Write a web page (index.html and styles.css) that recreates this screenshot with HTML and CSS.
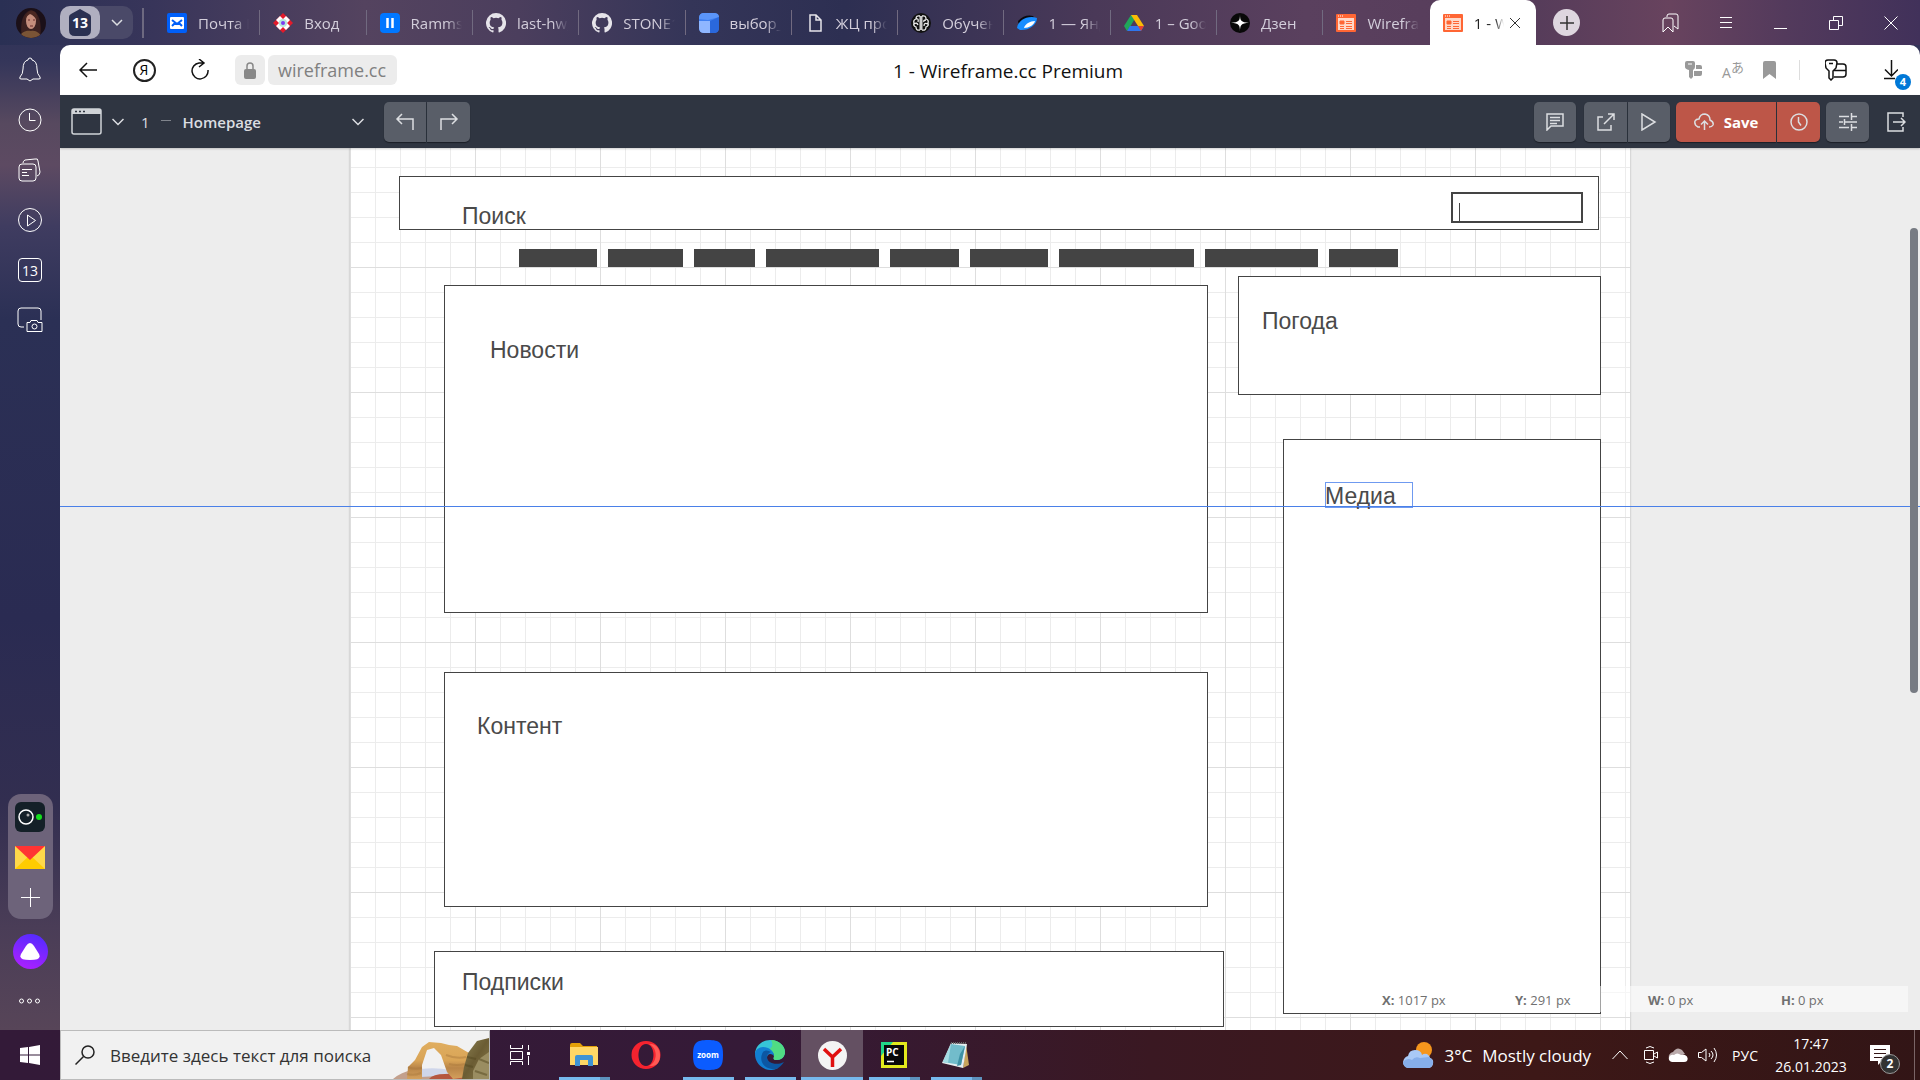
FILE: index.html
```html
<!DOCTYPE html>
<html lang="ru">
<head>
<meta charset="utf-8">
<title>1 - Wireframe.cc Premium</title>
<link rel="stylesheet" href="styles.css">
</head>
<body>
<div class="browser">
  <header class="tabstrip">
    <div class="profile">
      <svg width="30" height="30" viewBox="0 0 30 30"><defs><clipPath id="round"><circle cx="15" cy="15" r="15"/></clipPath></defs><g clip-path="url(#round)"><rect width="30" height="30" fill="#1b1018"/><path d="M6 30C4 18 5 5 15 2c9 2 11 15 9 28z" fill="#3c2120"/><ellipse cx="15" cy="13" rx="5" ry="8" fill="#c58e7c"/><path d="M9 12c0-6 4-9 7-9 4 0 6 4 5 10-2-4-4-6-7-7-2 1-4 3-5 6z" fill="#4a2822"/><path d="M12 12h2m3 0h2M14 18h3" stroke="#6b2d2b" stroke-width="1"/><path d="M3 30c2-6 7-8 12-7 5-1 9 2 11 7z" fill="#7a5436"/></g></svg>
    </div>
    <div class="tab-group">
      <button class="tab-count" aria-label="13 вкладок"><svg width="22" height="28" viewBox="0 0 22 28"><path d="M11 0 20 5q2 1 2 3v13q0 6-6 6H6q-6 0-6-6V8q0-2 2-3z" fill="#2b3152"/></svg><b>13</b></button>
      <button class="tab-menu" aria-label="Группы"><svg width="12" height="8" viewBox="0 0 12 8"><path d="m1 1 5 5 5-5" class="thin"/></svg></button>
    </div>
    <i class="strip-rule"></i>
    <nav class="tabs">
      <a class="tab" href="#"><svg width="20" height="20" viewBox="0 0 20 20"><rect width="20" height="20" rx="2" fill="#005ff9"/><rect x="3" y="4" width="14" height="12" rx="1" fill="#fff"/><path d="m5 7 5 4 5-4M5 13l3-3m7 3-3-3" fill="none" stroke="#005ff9" stroke-width="2"/></svg><span>Почта Mail</span></a>
      <a class="tab" href="#"><svg width="20" height="20" viewBox="0 0 20 20"><path d="m10 0 10 10-10 10L0 10z" fill="#e31b2b"/><path d="m7 3 3 3 3-3 4 4-3 3 3 3-4 4-3-3-3 3-4-4 3-3-3-3z" fill="#fff"/><circle cx="10" cy="10" r="4" fill="#b8e8d8"/><circle cx="10" cy="10" r="2" fill="#7a3cf0"/></svg><span>Вход</span></a>
      <a class="tab" href="#"><svg width="20" height="20" viewBox="0 0 20 20"><rect width="20" height="20" rx="4" fill="#07f"/><path d="M7.500 5v10m5-10v10" stroke="#fff" stroke-width="2.500"/></svg><span>Rammstein</span></a>
      <a class="tab" href="#"><svg width="20" height="20" viewBox="0 0 16 16"><path d="M8 0a8 8 0 0 0-2.530 15.590c.4.070.55-.17.55-.38v-1.490c-2.010.37-2.530-.49-2.690-.94-.09-.23-.48-.94-.82-1.130-.28-.15-.68-.52-.01-.53.63-.01 1.080.58 1.230.82.72 1.210 1.870.87 2.330.66.070-.52.280-.87.510-1.070-1.780-.2-3.640-.89-3.640-3.950 0-.87.310-1.590.82-2.150-.08-.2-.36-1.020.08-2.120 0 0 .67-.21 2.200.82a7.600 7.600 0 0 1 4 0c1.530-1.040 2.200-.82 2.200-.82.44 1.100.16 1.920.08 2.120.51.56.82 1.270.82 2.150 0 3.070-1.870 3.750-3.650 3.950.29.25.54.73.54 1.480v2.200c0 .21.15.46.55.38A8 8 0 0 0 8 0z" fill="#e6e4ea"/></svg><span>last-hw_2</span></a>
      <a class="tab" href="#"><svg width="20" height="20" viewBox="0 0 16 16"><path d="M8 0a8 8 0 0 0-2.530 15.590c.4.070.55-.17.55-.38v-1.490c-2.010.37-2.530-.49-2.690-.94-.09-.23-.48-.94-.82-1.130-.28-.15-.68-.52-.01-.53.63-.01 1.080.58 1.230.82.72 1.210 1.870.87 2.330.66.070-.52.280-.87.510-1.070-1.780-.2-3.640-.89-3.640-3.950 0-.87.310-1.590.82-2.150-.08-.2-.36-1.020.08-2.120 0 0 .67-.21 2.200.82a7.600 7.600 0 0 1 4 0c1.530-1.040 2.200-.82 2.200-.82.44 1.100.16 1.920.08 2.120.51.56.82 1.270.82 2.150 0 3.070-1.870 3.750-3.650 3.950.29.25.54.73.54 1.480v2.200c0 .21.15.46.55.38A8 8 0 0 0 8 0z" fill="#e6e4ea"/></svg><span>STONE1</span></a>
      <a class="tab" href="#"><svg width="20" height="20" viewBox="0 0 20 20"><rect width="20" height="20" rx="5" fill="#3f7ff0"/><path d="M0 6V5q0-5 5-5h10q5 0 5 4L9 7z" fill="#5b95f8"/><path d="M0 8h11v12H5q-5 0-5-5z" fill="#8fb6ff"/><path d="m11 8 9-4v11q0 5-5 5h-4z" fill="#2a68dc"/></svg><span>выбор_1</span></a>
      <a class="tab" href="#"><svg width="20" height="20" viewBox="0 0 20 20"><path d="M5 2h6l5 5v11H5zM11 2v5h5" fill="none" stroke="#e6e4ea" stroke-width="1.500"/></svg><span>ЖЦ прое</span></a>
      <a class="tab" href="#"><svg width="20" height="20" viewBox="0 0 20 20"><circle cx="10" cy="10" r="10" fill="#111"/><g fill="none" stroke="#eee" stroke-width="1.300"><path d="M9.200 3v14M10.800 3v14M9 3Q5 2 5 6q-3 1-2 4-1 3 2 4 0 4 4 3M11 3q4-1 4 3 3 1 2 4 1 3-2 4 0 4-4 3M5 6q3-1 2 3M3 11q3-2 4 1M15 7q-3 0-2 2M17 11q-4-2-4 2"/></g></svg><span>Обучение</span></a>
      <a class="tab" href="#"><svg width="20" height="20" viewBox="0 0 20 20"><path d="M1 8Q8 1 16 3l3 4-9 2-8 4z" fill="#0a0a10"/><path d="M0 15C1 7 11 2 20 5c0 7-9 13-17 12z" fill="#178dff"/><path d="M7 15c1-4 6-7 11-7-1 4-6 7-11 7z" fill="#fff"/></svg><span>1 — Янде</span></a>
      <a class="tab" href="#"><svg width="20" height="20" viewBox="0 0 20 20"><path d="M7 2h6L6 14l-3 4-3-5z" fill="#20a75a"/><path d="M7 2h6l7 11h-6z" fill="#fbbc05"/><path d="M6 13h14l-3 5H3z" fill="#2f76ed"/><path d="M14 13h6l-3 5z" fill="#e5432f"/></svg><span>1 – Googl</span></a>
      <a class="tab" href="#"><svg width="20" height="20" viewBox="0 0 20 20"><circle cx="10" cy="10" r="10" fill="#080808"/><path d="M10 1c0 7 1 8 9 9-8 0-9 2-9 9 0-7-1-9-9-9 8-1 9-2 9-9z" fill="#fff"/></svg><span>Дзен</span></a>
      <a class="tab" href="#"><svg width="20" height="18" viewBox="0 0 20 18"><rect width="20" height="18" rx="1" fill="#ff6634"/><path d="M2 4h16v12H2z" fill="#ffd8c8"/><path d="M2 2h1m1 0h1m1 0h1" stroke="#fff"/><path d="M4 7h4v3H4zm6 .5h6m-6 2h6M4 12.500h4m2 0h6M4 14.500h4m2 0h6" fill="#ff6634" stroke="#ff6634"/></svg><span>Wireframe</span></a>
      <a class="tab tab-active" href="#"><svg width="20" height="18" viewBox="0 0 20 18"><rect width="20" height="18" rx="1" fill="#ff6634"/><path d="M2 4h16v12H2z" fill="#ffd8c8"/><path d="M2 2h1m1 0h1m1 0h1" stroke="#fff"/><path d="M4 7h4v3H4zm6 .5h6m-6 2h6M4 12.500h4m2 0h6M4 14.500h4m2 0h6" fill="#ff6634" stroke="#ff6634"/></svg><span>1 - Wire</span><svg class="tab-close" width="10" height="10" viewBox="0 0 10 10"><path d="m0 0 10 10M10 0 0 10" stroke="#333" fill="none"/></svg></a>
    </nav>
    <button class="new-tab" aria-label="Новая вкладка"><svg width="14" height="14" viewBox="0 0 14 14"><path d="M7 0v14M0 7h14" stroke="#333" stroke-width="1.500"/></svg></button>
    <div class="window-controls">
      <button aria-label="Закладки"><svg width="18" height="20" viewBox="0 0 18 20"><path d="M1 19V7q0-2 2-2h6q2 0 2 2v12l-5-5zM5 4V3q0-2 2-2h7q2 0 2 2v13l-4-3" class="line"/></svg></button>
      <button aria-label="Меню"><svg width="12" height="12" viewBox="0 0 12 12"><path d="M0 .5h12M0 5.500h12M0 10.500h12" class="line"/></svg></button>
      <button aria-label="Свернуть"><svg width="14" height="14" viewBox="0 0 14 14"><path d="M0 12.500h13" class="line"/></svg></button>
      <button aria-label="Развернуть"><svg width="14" height="14" viewBox="0 0 14 14"><path d="M.5 4.500h9v9h-9zM4.500 4V.5h9v9H10" class="line"/></svg></button>
      <button aria-label="Закрыть"><svg width="14" height="14" viewBox="0 0 14 14"><path d="m.5.500 13 13m0-13-13 13" class="line"/></svg></button>
    </div>
  </header>

  <aside class="sidebar">
    <button aria-label="Уведомления"><svg width="24" height="26" viewBox="0 0 24 26"><path d="M2 20q3-3 3-8 0-8 5-9 0-2 2-2t2 2q5 1 5 9 0 5 3 8 1 2-1 2h-6l-3 2-3-2H3q-2 0-1-2z" class="line"/></svg></button>
    <button aria-label="История"><svg width="24" height="24" viewBox="0 0 24 24"><circle cx="12" cy="12" r="11" class="line"/><path d="M11.500 5v7.500h6" class="line"/></svg></button>
    <button aria-label="Коллекции"><svg width="24" height="24" viewBox="0 0 24 24"><rect x="1" y="6" width="17" height="17" rx="3" class="line"/><path d="M5 5q0-2 2-3l10-1q3-1 3 2l2 11q0 3-3 4M4 11.500h10M4 14.500h5M4 17.500h7" class="line"/></svg></button>
    <button aria-label="Видео"><svg width="24" height="24" viewBox="0 0 24 24"><circle cx="12" cy="12" r="11.500" class="line"/><path d="M9.500 7v11l8-5.500z" class="line"/></svg></button>
    <button class="calendar" aria-label="Календарь">13</button>
    <button aria-label="Снимок экрана"><svg width="26" height="26" viewBox="0 0 26 26"><path d="M24 13V4q0-3-3-3H4Q1 1 1 4v13q0 3 3 3h3" class="line"/><path d="M10 15.500h3l1-2h6l1 2h4v9H10z" class="line"/><circle cx="17.500" cy="19.500" r="2.500" class="line"/></svg></button>
    <div class="dock">
      <button aria-label="Камера"><svg width="30" height="30" viewBox="0 0 30 30"><rect width="30" height="30" rx="6" fill="#142028"/><circle cx="11" cy="15" r="7" fill="none" stroke="#fff" stroke-width="1.500"/><circle cx="13" cy="13" r="1.500" fill="#aaa"/><circle cx="24" cy="15" r="3" fill="#13e01c"/></svg></button>
      <button aria-label="Почта"><svg width="30" height="23" viewBox="0 0 30 23"><path d="M0 0h30v23H0z" fill="#ffd94a"/><path d="m0 23 15-14 15 14z" fill="#fc0"/><path d="M0 0h30L15 14z" fill="#f33"/></svg></button>
      <button aria-label="Добавить"><svg width="20" height="28" viewBox="0 0 20 28"><path d="M10.500 5v19M1 14.500h19" class="line"/></svg></button>
    </div>
    <button class="alice" aria-label="Алиса"><svg width="20" height="18" viewBox="0 0 20 18"><path d="M10 0q2 0 4 3l5 8q3 6-9 6t-9-6l5-8q2-3 4-3z" fill="#fff"/></svg></button>
    <button aria-label="Ещё"><svg width="24" height="6" viewBox="0 0 24 6"><circle cx="3.500" cy="3" r="2" class="line"/><circle cx="11.500" cy="3" r="2" class="line"/><circle cx="19.500" cy="3" r="2" class="line"/></svg></button>
  </aside>

  <div class="window">
    <div class="addressbar">
      <div class="nav-buttons">
        <button aria-label="Назад"><svg width="18" height="16" viewBox="0 0 18 16"><path d="M18 8H1m7-7L1 8l7 7" class="ink"/></svg></button>
        <button aria-label="Яндекс" class="ya"><span>Я</span></button>
        <button aria-label="Обновить"><svg width="20" height="22" viewBox="0 0 20 22"><path d="M13 4H9a8 8 0 1 0 9 7M9 0l5 4-5 4" class="ink"/></svg></button>
      </div>
      <div class="site">
        <button class="lock" aria-label="Защищено"><svg width="12" height="17" viewBox="0 0 12 17"><path d="M3 8V4q0-3 3-3t3 3v4" fill="none" stroke="#888" stroke-width="1.500"/><rect y="7" width="12" height="10" rx="2" fill="#888"/></svg></button>
        <a class="host" href="#">wireframe.cc</a>
      </div>
      <h1 class="page-title">1 - Wireframe.cc Premium</h1>
      <div class="page-tools">
        <button aria-label="Пароли"><svg width="18" height="18" viewBox="0 0 18 18" fill="#999"><path d="M1 2q0-2 2-2h6q2 0 2 2v4q0 2-2 3v7l-2 2-2-2V9Q1 8 1 6z"/><path d="M12 4h4q2 0 2 2v2h-6zM10 10h8v3q0 2-2 2h-6z"/><path d="M4 3h4" stroke="#fff"/></svg></button>
        <button class="translate" aria-label="Перевести"><sub>A</sub><sup>あ</sup></button>
        <button aria-label="В закладки"><svg width="13" height="18" viewBox="0 0 13 18"><path d="M0 2q0-2 2-2h9q2 0 2 2v16l-6.500-5L0 18z" fill="#999"/></svg></button>
        <i></i>
        <button aria-label="Ключи"><svg width="22" height="22" viewBox="0 0 22 22"><path d="M3 1h6q3 0 3 3l-1 5-3 3v7l-2 2-2-2v-7L1 9 0 4q0-3 3-3zM4 4.500h4M12.500 5H18q3 0 3 3v7q0 3-3 3h-9M9 11.500h12" class="ink"/></svg></button>
        <button class="downloads" aria-label="Загрузки"><svg width="14" height="20" viewBox="0 0 14 20"><path d="M7.500 0v16M1 9.500l6.500 6.500 6.500-6.500M0 18.500h11" class="ink"/></svg><b>4</b></button>
      </div>
    </div>

    <div class="toolbar">
      <button class="device" aria-label="Устройство"><svg width="31" height="27" viewBox="0 0 31 27"><rect x="1" y="1" width="29" height="25" rx="2" fill="none" stroke="#d0d3d7" stroke-width="1.500"/><path d="M1 1h29v5H1z" fill="#d0d3d7"/><path d="M4 3.500h2m2 0h2m2 0h2" stroke="#2f3540" stroke-width="1.500"/></svg><svg width="12" height="8" viewBox="0 0 12 8"><path d="m.5 1 5.500 5.500L11.500 1" class="thin"/></svg></button>
      <button class="page-picker"><span>1</span><i></i><b>Homepage</b><svg width="12" height="8" viewBox="0 0 12 8"><path d="m.5 1 5.500 5.500L11.500 1" class="thin"/></svg></button>
      <div class="group">
        <button class="tool undo" aria-label="Отменить"><svg width="20" height="18" viewBox="0 0 20 18"><path d="M18 17V6H2m5-5L2 6l5 5" class="thin"/></svg></button>
        <button class="tool" aria-label="Повторить"><svg width="20" height="18" viewBox="0 0 20 18"><path d="M2 17V6h16m-5-5 5 5-5 5" class="thin"/></svg></button>
      </div>
      <div class="actions">
        <button class="tool comment" aria-label="Комментарии"><svg width="18" height="18" viewBox="0 0 18 18"><path d="M1 1h16v12H5l-4 4zM4 4.500h10M4 7.500h10M4 10.500h7" class="thin"/></svg></button>
        <div class="group">
          <button class="tool" aria-label="Открыть"><svg width="18" height="18" viewBox="0 0 18 18"><path d="M6 4H1v13h13v-5M11 1h6v6M17 1 7 11" class="thin"/></svg></button>
          <button class="tool undo" aria-label="Просмотр"><svg width="16" height="18" viewBox="0 0 16 18"><path d="M1 1v16l13-8z" class="thin"/></svg></button>
        </div>
        <div class="group">
          <button class="tool save"><svg width="20" height="18" viewBox="0 0 20 18"><path d="M6 14H4Q0 12 1 8q1-2 4-2 1-5 6-5 5 1 5 6 4 2 3 5-1 2-4 2M10.500 17V8M7 11.500 10.500 8l3.500 3.500" class="thin"/></svg>Save</button>
          <button class="tool history" aria-label="Версии"><svg width="18" height="18" viewBox="0 0 18 18"><circle cx="9" cy="9" r="8" class="thin"/><path d="M8.500 4v5l2.500 3.500" class="thin"/></svg></button>
        </div>
        <button class="tool" aria-label="Настройки"><svg width="18" height="18" viewBox="0 0 18 18"><path d="M0 3.500h10m2 0h6M0 9h4m2 0h12M0 14.500h10m2 0h6M12.500 0v7M5.500 6v6M12.500 11v7" class="thin"/></svg></button>
        <button class="exit" aria-label="Выйти"><svg width="19" height="20" viewBox="0 0 19 20"><path d="M16 5V1H1v18h15v-4M6 10h12m-4-4 4 4-4 4" class="thin"/></svg></button>
      </div>
    </div>

    <main class="viewport">
      <div class="artboard">
        <section class="shape s-search"></section>
        <input class="shape s-input" aria-label="Поиск" value="">
        <i class="caret"></i>
        <h2 class="label l-search">Поиск</h2>
        <div class="bars"><i class="w78"></i><i class="w75"></i><i class="w61"></i><i class="w113"></i><i class="w69"></i><i class="w78"></i><i class="w135"></i><i class="w113"></i><i class="w69"></i></div>
        <section class="shape s-news"></section><h2 class="label l-news">Новости</h2>
        <section class="shape s-weather"></section><h2 class="label l-weather">Погода</h2>
        <section class="shape s-media"></section><h2 class="label l-media">Медиа</h2>
        <section class="shape s-content"></section><h2 class="label l-content">Контент</h2>
        <section class="shape s-subs"></section><h2 class="label l-subs">Подписки</h2>
      </div>
      <i class="guide"></i>
      <div class="readout"><span><b>X:</b> 1017 px</span><span><b>Y:</b> 291 px</span><span><b>W:</b> 0 px</span><span><b>H:</b> 0 px</span></div>
      <i class="scroll-thumb"></i>
    </main>
  </div>
</div>

<footer class="taskbar">
  <button class="start" aria-label="Пуск"><svg width="20" height="20" viewBox="0 0 20 20" fill="#fff"><path d="m0 3 8-1v7.500H0zM9 2l11-2v9.500H9zM0 10.500h8V18l-8-1zM9 10.500h11V20L9 18z"/></svg></button>
  <label class="search">
    <svg width="20" height="20" viewBox="0 0 20 20"><circle cx="13" cy="7" r="6" fill="none" stroke="#222" stroke-width="1.500"/><path d="M8.500 11.500.500 19.500" stroke="#222" stroke-width="1.500"/></svg>
    <input type="text" placeholder="Введите здесь текст для поиска" aria-label="Поиск Windows">
    <svg class="fossils" width="98" height="48" viewBox="0 0 98 48"><defs><linearGradient id="sand" x2="0" y2="1"><stop stop-color="#e0ae60"/><stop offset=".5" stop-color="#d9a456"/><stop offset=".7" stop-color="#b98548"/><stop offset="1" stop-color="#d4a05c"/></linearGradient><linearGradient id="rock" x2="1" y2="1"><stop stop-color="#8d8355"/><stop offset=".5" stop-color="#6b5c33"/><stop offset="1" stop-color="#8a7c4c"/></linearGradient></defs><path d="M2 48q8-7 20-9h52v9z" fill="#c3a08c"/><path d="M30 38q14-2 30 1l4 5-34 2z" fill="#cfd6ea"/><path d="M38 48q4-5 16-5 14-1 20 5z" fill="#b5573f"/><path d="M16 48 17 36 24 29 31 16 38 11 50 12 58 14 66 15 78 22 76 46 62 48 56 41 50 24 43 17 36 19 31 34V48z" fill="url(#sand)"/><path d="M17 36q6 3 14 1M16 43q7 2 14-1M55 24q10 4 20 2M58 33q8 2 16 0" fill="none" stroke="#a8783c" stroke-opacity=".45" stroke-width="2"/><path d="m71 48 2-12 4-14 9-12 12-3v41z" fill="url(#rock)"/><path d="M82 48v-8l6-12 10-7v27z" fill="#9a8d61"/><path d="m74 34 8 2M76 26l9 2M84 40l12 4M88 28l10 4" stroke="#54471f" stroke-opacity=".5" stroke-width="2"/></svg>
  </label>
  <div class="apps">
    <button class="views" aria-label="Представление задач"><svg width="20" height="20" viewBox="0 0 20 20"><path d="M.5 0v3.500h12V0M.5 6.500h12v8H.5zM.5 20v-3.500h12V20M18.500 0v5m0 6v9" class="line"/><path d="M17 7h3v3h-3z" fill="#fff"/></svg></button>
    <button class="running many" aria-label="Проводник"><svg width="28" height="24" viewBox="0 0 28 24"><path d="M0 2q0-2 2-2h8l3 3h14v5H0z" fill="#e3a008"/><path d="M0 4h28v18H0z" fill="#ffd766"/><path d="M5 23V14q0-2 2-2h14q2 0 2 2v9h-5v-6h-8v6z" fill="#3f93d4"/></svg></button>
    <button aria-label="Opera"><svg width="30" height="30" viewBox="0 0 30 30"><path fill-rule="evenodd" d="M15 1a14.500 14 0 1 0 0 28 14.500 14 0 1 0 0-28zm0 3c-10 0-10 22 0 22S25 4 15 4z" fill="#f5232f"/><path d="M18 4c9 4 9 18 0 22 10 1 11-6 11-11S26 3 18 4z" fill="#ff5a55"/></svg></button>
    <button class="running" aria-label="Zoom"><svg width="30" height="30" viewBox="0 0 30 30"><path d="M15 0c12 0 15 3 15 15s-3 15-15 15S0 27 0 15 3 0 15 0z" fill="#0b5cff"/></svg><b class="zoom-word">zoom</b></button>
    <button class="running" aria-label="Edge"><svg width="30" height="30" viewBox="0 0 30 30"><path d="M0 15C0 4 9 0 15 0c9 0 15 6 15 12 0 5-4 8-8 8-5 0-3-2-3-4 0-4-4-7-9-7-6 0-10 4-10 6z" fill="#36c5d8"/><path d="M16 0c9 0 14 7 14 12s-4 8-8 8c-5 0-3-2-3-4 0-4-3-6-5-7 4-1 4-6 2-9z" fill="#50dc83"/><path d="M0 14c0-4 4-7 8-7 6 0 11 4 11 9-2-3-7-3-7 2 0 6 5 9 11 10C13 34 0 26 0 14z" fill="#127fd2"/><path d="M8 12c-5 9 1 18 13 17 3-1 6-4 8-7-8 4-17 1-17-5 0-3 2-4 4-5-3-2-6-2-8 0z" fill="#0c57a3"/></svg></button>
    <button class="running current" aria-label="Yandex"><svg width="29" height="29" viewBox="0 0 29 29"><circle cx="14.500" cy="14.500" r="14.500" fill="#f4f4f4"/><path d="m6 8 8.500 8L23 8M14.500 15v11" fill="none" stroke="#e01010" stroke-width="3.500"/></svg></button>
    <button class="running many" aria-label="PyCharm"><svg width="26" height="26" viewBox="0 0 26 26"><path d="M0 0h26v26H0z" fill="#e2ea1c"/><path d="M0 0h12L0 14z" fill="#21d789"/><path d="M3 3h20v20H3z" fill="#080808"/><path d="M6 19.500h7" stroke="#fff" stroke-width="1.500"/></svg><b class="pc-word">PC</b></button>
    <button class="running many" aria-label="Блокнот"><svg width="28" height="26" viewBox="0 0 28 26"><path d="m24 2 3 21-6 3z" fill="#c7a35a"/><path d="m9 1 16 1-4 24-21-5z" fill="#e5edf0"/><path d="m9 2 14 2-4 19-18-3z" fill="#72bccb"/><path d="M9 2 6 21l-5-1z" fill="#a5dce4"/><path d="m18 12 5-8-4 19-4 1z" fill="#3e91a5"/><path d="M9 1h16" stroke="#666" stroke-dasharray="1 1" stroke-width="2"/></svg></button>
  </div>
  <div class="tray">
    <button class="weather"><svg width="31" height="27" viewBox="0 0 31 27"><circle cx="21" cy="8" r="8" fill="#f5961d"/><path d="M6 26q-6-1-6-6 1-5 5-6 1-6 7-6 6 0 7 5 2-2 5-1 3 2 3 4 4 1 3 6-1 4-5 4z" fill="#a9c9f6"/><path d="M4 26q-4-2-4-6 4-5 9-2 3-4 8-2l9-1q4 2 4 6-1 5-5 5z" fill="#86aeea"/></svg><span>3°C</span><span>Mostly cloudy</span></button>
    <button class="more" aria-label="Скрытые значки"><svg width="16" height="10" viewBox="0 0 16 10"><path d="m.5 9 7.500-8 7.500 8" class="line"/></svg></button>
    <button aria-label="Встреча"><svg width="14" height="18" viewBox="0 0 14 18"><path d="M.5 4.500h9v9h-9zM10 8l3.500-2v6L10 10M2 2q4-3 8 0M2 16q4 3 8 0" class="line"/></svg></button>
    <button aria-label="OneDrive"><svg width="20" height="14" viewBox="0 0 20 14"><path d="M4 12Q0 11 1 7q2-3 4-3 4-6 9-2l3 4z" fill="#b9a9aa"/><path d="M4 14Q0 13 1 9q2-3 5-2 3-3 7 0l4 0q4 2 2 6-1 1-3 1z" fill="#fff"/></svg></button>
    <button aria-label="Звук"><svg width="20" height="16" viewBox="0 0 20 16"><path d="M.5 5.500h3L8 2v12l-4.500-3.500h-3zM11 6q2 2 0 4M13 4q4 4 0 8M16 1q5 7 0 14" class="line"/></svg></button>
    <button class="lang">РУС</button>
    <button class="clock"><span>17:47</span><span>26.01.2023</span></button>
    <button class="notices" aria-label="Уведомления"><svg width="20" height="20" viewBox="0 0 20 20"><path d="M0 0h20v16h-8l-4 4v-4H0z" fill="#fff"/><path d="M4 4.500h12M4 8.500h12M4 12.500h8" stroke="#331516"/></svg><b>2</b></button>
  </div>
</footer>
</body>
</html>
```
FILE: styles.css
```css
* { box-sizing: border-box; }
html, body { height: 100%; margin: 0; }
body {
  display: flex;
  flex-direction: column;
  overflow: hidden;
  font-family: "Open Sans", "Noto Sans", "Noto Sans CJK JP", sans-serif;
  font-size: 15px;
}
button {
  display: flex;
  align-items: center;
  justify-content: center;
  padding: 0;
  border: 0;
  background: none;
  color: inherit;
  font: inherit;
}
a { color: inherit; text-decoration: none; }
svg { display: block; flex: none; }
.line { fill: none; stroke: #fff; stroke-width: 1; }
.ink { fill: none; stroke: #111; stroke-width: 1.5; }
.thin { fill: none; stroke: #dcdee1; stroke-width: 1.5; }

.browser {
  flex: 1;
  min-height: 0;
  display: grid;
  grid-template: 45px 1fr / 60px 1fr;
  background: linear-gradient(#2d3155 0, #35365a 6%, #57495f 12%, #5d4a62 16%, #3f3c60 22%, #2b3055 31%, #2a2b52 60%, #322e50 78%, #4a3d57 90%, #574558 100%);
}

/* Tab strip */
.tabstrip {
  grid-column: 1 / 3;
  display: flex;
  align-items: center;
  min-width: 0;
  color: #d3cedb;
  background: linear-gradient(90deg, #2a3054 0, #38355a 8%, #54435f 19%, #4b3e5d 27%, #343558 36%, #2d2f52 44%, #4a3958 57%, #5a405e 68%, #563c5a 80%, #68435e 87%, #533a5c 93%, #41315a 100%);
}
.profile { width: 60px; display: flex; justify-content: center; padding-left: 2px; }
.tab-group { display: flex; width: 73px; height: 33px; border-radius: 10px; background: #4a4968; }
.tab-count { position: relative; width: 40px; border-radius: 10px; background: #b0afc0; }
.tab-count b { position: absolute; color: #fff; font-size: 14px; }
.tab-menu { flex: 1; }
.strip-rule { width: 2px; height: 30px; margin: 0 10px 0 9px; background: #6d6980; }
.tabs { flex: 0 1 1382px; min-width: 0; height: 45px; display: grid; grid-template-columns: repeat(13, minmax(0, 1fr)); }
.tab {
  position: relative;
  display: flex;
  align-items: center;
  gap: 11px;
  padding: 0 11px 0 13px;
}
.tab:not(.tab-active)::after { content: ""; position: absolute; right: 0; top: 10px; width: 1px; height: 25px; background: #716a80; }
.tab:nth-last-child(2)::after { visibility: hidden; }
.tab span {
  flex: 1;
  min-width: 0;
  overflow: hidden;
  white-space: nowrap;
  mask-image: linear-gradient(90deg, #000 70%, transparent);
}
.tab-active { color: #222; background: #fff; border-radius: 10px 10px 0 0; padding-right: 16px; gap: 0; }
.tab-active span { margin: 0 6px 0 11px; }
.new-tab { width: 27px; height: 27px; margin-left: 17px; border-radius: 50%; background: #ded6df; }
.window-controls { display: flex; margin-left: auto; padding-right: 2px; }
.window-controls button { width: 55px; height: 44px; }

/* Side bar */
.sidebar { display: flex; flex-direction: column; align-items: center; color: #fff; }
.sidebar > button { width: 50px; height: 50px; }
.sidebar > .calendar { width: 24px; height: 24px; margin: 13px 0; border: 1px solid #fff; border-radius: 4px; font-size: 14px; }
.dock { width: 45px; height: 125px; margin: auto 0 15px; padding: 8px 0; display: flex; flex-direction: column; align-items: center; justify-content: space-between; border-radius: 13px; background: #6d637a; }
.sidebar > .alice { width: 35px; height: 35px; border-radius: 50%; background: linear-gradient(200deg, #4b2cff, #b51fff); }
.sidebar > .alice + button { height: 44px; margin: 10px 0 7px; }

.window { display: flex; flex-direction: column; min-width: 0; min-height: 0; border-radius: 10px 10px 0 0; overflow: hidden; background: #fff; }

/* Address bar */
.addressbar { height: 50px; display: grid; grid-template: "nav title tools" 50px / 1fr auto 1fr; align-items: center; flex: none; }
.nav-buttons { grid-area: nav; display: flex; }
.nav-buttons button { width: 56px; height: 50px; }
.ya span { width: 23px; height: 23px; border: 2px solid #222; border-radius: 50%; font-size: 14px; line-height: 18px; }
.site { grid-area: nav; display: flex; gap: 3px; padding-left: 175px; justify-self: start; }
.lock { width: 30px; height: 30px; border-radius: 6px; background: #ececec; }
.host { height: 30px; padding: 0 11px 0 10px; border-radius: 6px; background: #ececec; color: #808080; font-size: 18px; line-height: 31px; }
.page-title { grid-area: title; margin: 2px -36px 0 0; font-size: 19px; font-weight: 400; color: #111; }
.page-tools { grid-area: tools; display: flex; align-items: center; justify-content: flex-end; color: #999; padding-right: 2px; }
.page-tools button { width: 38px; height: 50px; }
.page-tools i { width: 1px; height: 20px; margin: 0 8px 0 11px; background: #ddd; }
.page-tools i + button { width: 55px; }
.page-tools .downloads { position: relative; width: 55px; }
.downloads b { position: absolute; left: 32px; top: 29px; width: 16px; height: 16px; border-radius: 50%; background: #0078d7; color: #fff; font-size: 11px; line-height: 16px; }
.translate { padding-left: 4px !important; }
.translate sub { font-size: 14px; line-height: 14px; padding-top: 6px; }
.translate sup { font-size: 13px; line-height: 13px; padding-bottom: 6px; }

/* Editor toolbar */
.toolbar { position: relative; z-index: 1; flex: none; height: 53px; display: flex; align-items: center; padding: 0 14px 0 11px; background: #2f3541; color: #dcdee1; box-shadow: 0 1px 2px #0003; }
.device { gap: 10px; height: 40px; }
.page-picker { width: 223px; height: 40px; margin: 0 20px 0 17px; justify-content: flex-start; font-size: 15px; }
.page-picker i { width: 10px; height: 1px; margin: 0 12px 2px 11px; background: #80848c; }
.page-picker b { font-weight: 600; }
.page-picker svg { margin-left: auto; }
.group { display: flex; gap: 1px; }
.tool { width: 43px; height: 40px; border-radius: 5px; background: #595e68; box-shadow: 0 1px 1px #1b1f27; }
.tool.undo, .tool.comment { width: 42px; }
.group .tool:first-child { border-radius: 5px 0 0 5px; }
.group .tool:last-child { border-radius: 0 5px 5px 0; }
.actions { display: flex; align-items: center; gap: 6px; margin-left: auto; }
.tool.comment { margin-right: 2px; }
.tool.save { width: 100px; gap: 10px; background: #bd5648; color: #fff; font-weight: 700; }
.tool.history { background: #bd5648; }
.exit { width: 19px; height: 40px; margin-left: 12px; }

/* Canvas */
.viewport { position: relative; flex: 1; min-height: 0; overflow: hidden; background: #ededed; }
.artboard {
  position: relative;
  width: 1280px;
  height: 1200px;
  margin: 0 auto;
  box-shadow: 0 0 2px #0004;
  background-color: #fff;
  background-image:
    linear-gradient(#dedede 1px, transparent 1px),
    linear-gradient(90deg, #dedede 1px, transparent 1px),
    linear-gradient(#ececec 1px, transparent 1px),
    linear-gradient(90deg, #ececec 1px, transparent 1px);
  background-size: 125px 125px, 125px 125px, 25px 25px, 25px 25px;
  background-position: 0 119px, 125px 0, 0 19px, 0 0;
}
.shape { position: absolute; border: 1px solid #444; background: #fff; }
.s-search { left: 49px; top: 28px; width: 1200px; height: 54px; }
.s-input { left: 1101px; top: 44px; width: 132px; height: 31px; border-width: 2px; }
.s-news { left: 94px; top: 137px; width: 764px; height: 328px; }
.s-weather { left: 888px; top: 128px; width: 363px; height: 119px; }
.s-media { left: 933px; top: 291px; width: 318px; height: 575px; }
.s-content { left: 94px; top: 524px; width: 764px; height: 235px; }
.s-subs { left: 84px; top: 803px; width: 790px; height: 76px; }
.caret { position: absolute; left: 1109px; top: 55px; width: 1px; height: 20px; background: #444; }
.bars { position: absolute; left: 169px; top: 101px; display: flex; gap: 11px; }
.bars i { height: 18px; background: #444; }
.w61 { width: 61px; }
.w69 { width: 69px; }
.w75 { width: 75px; }
.w78 { width: 78px; }
.w113 { width: 113px; }
.w135 { width: 135px; }
.label { position: absolute; margin: 0; font: 400 23px/26px "Liberation Sans", Arial, sans-serif; color: #4a4a4a; }
.l-search { left: 112px; top: 55px; }
.l-news { left: 140px; top: 189px; }
.l-weather { left: 912px; top: 160px; }
.l-media { left: 975px; top: 334px; width: 88px; height: 26px; line-height: 28px; box-shadow: inset 0 0 0 1px #6f9af0; }
.l-content { left: 127px; top: 565px; }
.l-subs { left: 112px; top: 821px; }
.guide { position: absolute; left: 0; right: 0; top: 358px; height: 1px; background: #4a80e8; }
.readout { position: absolute; right: 12px; bottom: 18px; display: grid; grid-template-columns: repeat(4, 133px); height: 26px; background: #ffffff80; color: #707070; font-size: 13px; line-height: 29px; }
.readout span { padding-left: 6px; }
.scroll-thumb { position: absolute; right: 2px; top: 80px; width: 8px; height: 465px; border-radius: 4px; background: #777b83; }

/* Taskbar */
.taskbar { flex: none; height: 50px; display: flex; background: linear-gradient(90deg, #331a38, #351a37 40%, #3a1822 60%, #3d1817 80%, #321516); color: #fff; }
.start { width: 60px; }
.search { width: 430px; display: flex; align-items: center; padding-left: 14px; background: #f1f1f1; border: 1px solid #bbb; overflow: hidden; }
.search input { flex: 1; min-width: 0; padding: 0 0 0 15px; border: 0; background: none; font: inherit; font-size: 17px; }
.search input::placeholder { color: #333; opacity: 1; }
.search .fossils { margin-left: -40px; align-self: flex-end; }
.apps { display: flex; }
.apps button { position: relative; width: 62px; height: 50px; }
.apps .views { width: 60px; margin-right: 3px; }
.apps .running::after { content: ""; position: absolute; left: 6px; bottom: 0; width: 51px; height: 3px; background: #76b9ed; }
.apps .many::after { background: linear-gradient(90deg, #76b9ed 41px, #5d92bd 41px); }
.apps .current { background: #645062; }
.apps .current::after { left: 0; width: 100%; }
.zoom-word { position: absolute; font-size: 8px; line-height: 10px; }
.pc-word { position: absolute; left: 23px; top: 16px; font-size: 10px; line-height: 12px; }
.tray { display: flex; align-items: center; margin-left: auto; padding-right: 5px; }
.tray button { height: 50px; margin-left: 10px; }
.tray .weather { gap: 10px; margin: 0 11px 0 0; font-size: 17px; }
.tray .more { margin-right: 6px; }
.tray .lang { margin-left: 14px; font-size: 14px; }
.tray .clock { width: 70px; margin-left: 18px; flex-direction: column; font-size: 14px; line-height: 23px; }
.tray .notices { position: relative; width: 69px; margin-left: 0; border-right: 1px solid #7a6466; }
.notices b { position: absolute; left: 34px; top: 24px; width: 20px; height: 20px; border: 1px solid #999; border-radius: 50%; background: #333; font-size: 12px; line-height: 18px; }
```
